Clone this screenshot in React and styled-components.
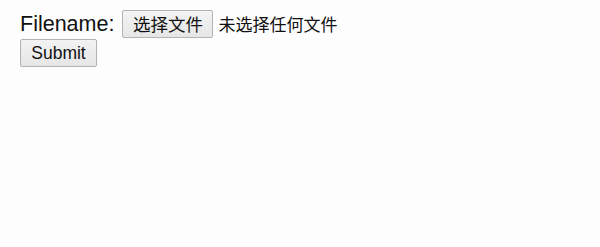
import styled, { createGlobalStyle } from "styled-components";

const GlobalStyle = createGlobalStyle`
  html, body {
    margin: 0;
    padding: 0;
    background: #fdfdfd;
  }
  body {
    font-family: "Liberation Sans", Arial, sans-serif;
    color: #111;
  }
`;

const Form = styled.form`
  display: flex;
  flex-direction: column;
  align-items: flex-start;
  padding: 10px 20px 0;
  width: 600px;
  height: 247px;
  box-sizing: border-box;
`;

const Row = styled.div`
  display: flex;
  align-items: center;
  margin-top: ${(props) => props.gap || 0}px;
`;

const Label = styled.label`
  font-size: 21.5px;
  line-height: 28px;
  margin-right: 8px;
`;

const Button = styled.button`
  box-sizing: border-box;
  width: ${(props) => props.width}px;
  height: 28px;
  padding: 0;
  margin: 0;
  border: 1px solid #b3b3b3;
  border-radius: 2px;
  background: linear-gradient(#f3f3f3, #e6e6e6);
  color: #111;
  font-family: ${(props) =>
    props.cjk
      ? `"Noto Sans CJK SC", sans-serif`
      : `"Liberation Sans", Arial, sans-serif`};
  font-size: 17.5px;
  line-height: 26px;
  cursor: pointer;
`;

const Status = styled.span`
  margin-left: 5px;
  font-family: "Noto Sans CJK SC", sans-serif;
  font-size: 17px;
  line-height: 28px;
  color: #111;
`;

export default function App() {
  return (
    <>
      <GlobalStyle />
      <Form onSubmit={(e) => e.preventDefault()}>
        <Row>
          <Label>Filename:</Label>
          <Button type="button" width={91} cjk>
            选择文件
          </Button>
          <Status>未选择任何文件</Status>
        </Row>
        <Row gap={1}>
          <Button type="submit" width={77}>
            Submit
          </Button>
        </Row>
      </Form>
    </>
  );
}
